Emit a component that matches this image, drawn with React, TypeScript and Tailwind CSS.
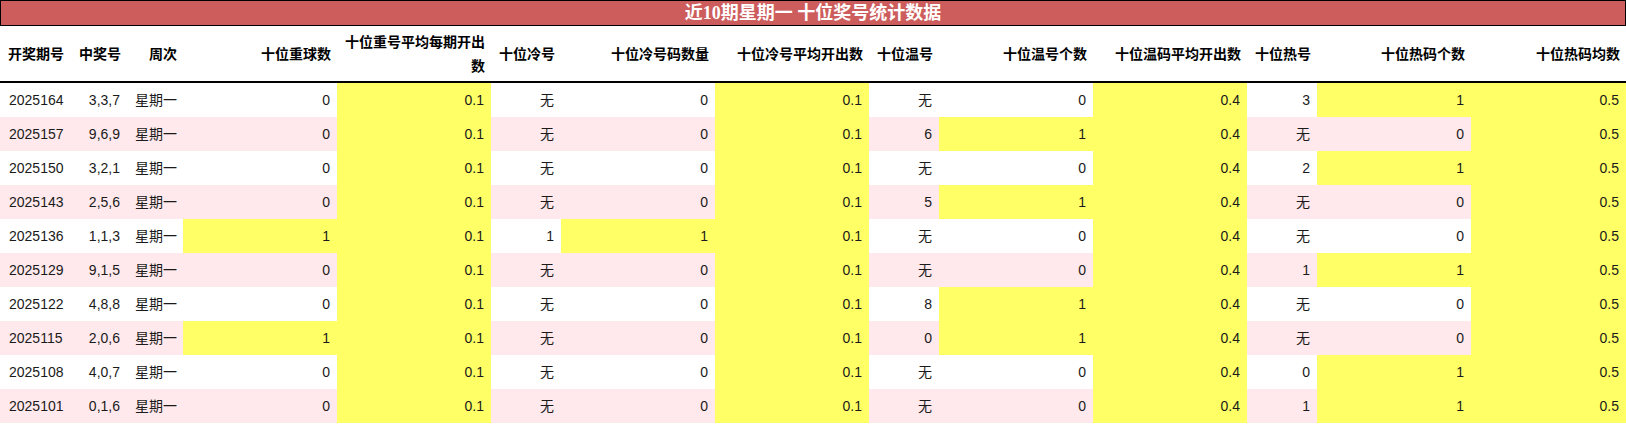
import React from "react";

type Row = (string | number)[];

const rows: Row[] = [
  ["2025164", "3,3,7", "星期一", "0", "0.1", "无", "0", "0.1", "无", "0", "0.4", "3", "1", "0.5"],
  ["2025157", "9,6,9", "星期一", "0", "0.1", "无", "0", "0.1", "6", "1", "0.4", "无", "0", "0.5"],
  ["2025150", "3,2,1", "星期一", "0", "0.1", "无", "0", "0.1", "无", "0", "0.4", "2", "1", "0.5"],
  ["2025143", "2,5,6", "星期一", "0", "0.1", "无", "0", "0.1", "5", "1", "0.4", "无", "0", "0.5"],
  ["2025136", "1,1,3", "星期一", "1", "0.1", "1", "1", "0.1", "无", "0", "0.4", "无", "0", "0.5"],
  ["2025129", "9,1,5", "星期一", "0", "0.1", "无", "0", "0.1", "无", "0", "0.4", "1", "1", "0.5"],
  ["2025122", "4,8,8", "星期一", "0", "0.1", "无", "0", "0.1", "8", "1", "0.4", "无", "0", "0.5"],
  ["2025115", "2,0,6", "星期一", "1", "0.1", "无", "0", "0.1", "0", "1", "0.4", "无", "0", "0.5"],
  ["2025108", "4,0,7", "星期一", "0", "0.1", "无", "0", "0.1", "无", "0", "0.4", "0", "1", "0.5"],
  ["2025101", "0,1,6", "星期一", "0", "0.1", "无", "0", "0.1", "无", "0", "0.4", "1", "1", "0.5"],
];

const headers = [
  "开奖期号",
  "中奖号",
  "周次",
  "十位重球数",
  "十位重号平均每期开出数",
  "十位冷号",
  "十位冷号码数量",
  "十位冷号平均开出数",
  "十位温号",
  "十位温号个数",
  "十位温码平均开出数",
  "十位热号",
  "十位热码个数",
  "十位热码均数",
];

const alwaysYellow = new Set([4, 7, 10, 13]);
const yellowIfOne = new Set([3, 6, 9, 12]);

function isYellow(ci: number, v: string | number) {
  if (alwaysYellow.has(ci)) return true;
  if (yellowIfOne.has(ci) && String(v) === "1") return true;
  return false;
}

export default function App() {
  return (
    <div className="w-[1626px] h-[424px] bg-white font-['Liberation_Sans','Noto_Sans_CJK_SC',sans-serif] text-[14px] text-[#1a1a1a] overflow-hidden">
      <div className="h-[26px] bg-[#cd5c5c] border border-black flex items-center justify-center">
        <span className="text-white font-bold text-[18px] leading-6 font-['Liberation_Serif','Noto_Sans_CJK_SC',serif]">
          近10期星期一 十位奖号统计数据
        </span>
      </div>
      <div className="grid grid-cols-[71px_56px_56px_154px_154px_70px_154px_154px_70px_154px_154px_70px_154px_155px]">
        {headers.map((h, i) => (
          <div
            key={h}
            className={
              "h-[57px] border-b-2 border-black flex items-center font-bold text-black leading-6 px-1.5 " +
              (i === 0 ? "justify-start text-left pl-2" : "justify-end text-right")
            }
          >
            <span>{h}</span>
          </div>
        ))}
        {rows.map((r, ri) =>
          r.map((v, ci) => {
            const yellow = isYellow(ci, v);
            const bg = yellow ? "bg-[#ffff66]" : ri % 2 === 1 ? "bg-[#ffe9ec]" : "bg-white";
            const align =
              ci === 0 ? "justify-start pl-[9px]" : ci === 2 ? "justify-start pl-2" : "justify-end pr-[7px]";
            return (
              <div key={ri + "-" + ci} className={"h-[34px] flex items-center " + bg + " " + align}>
                {v}
              </div>
            );
          })
        )}
      </div>
    </div>
  );
}
